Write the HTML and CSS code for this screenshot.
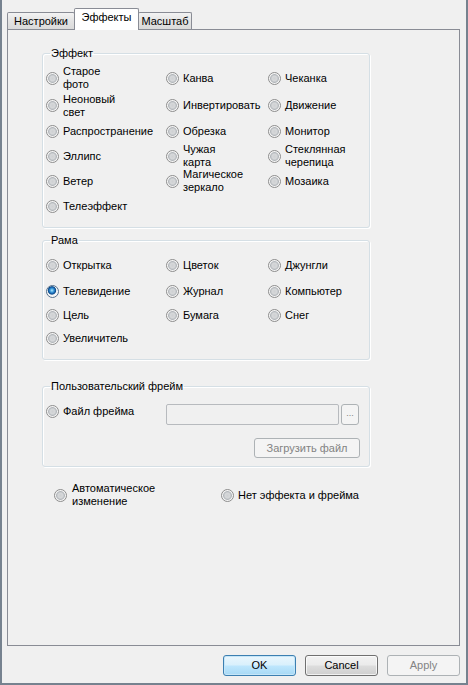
FILE: index.html
```html
<!DOCTYPE html>
<html>
<head>
<meta charset="utf-8">
<link rel="stylesheet" href="styles.css">
</head>
<body>
<div class="window">
  <div class="tabs">
    <div class="tab t1">Настройки</div>
    <div class="tab active t2">Эффекты</div>
    <div class="tab t3">Масштаб</div>
  </div>
  <div class="panel">
    <fieldset class="group g-effect">
      <legend>Эффект</legend>
      <div class="grid effect-grid">
        <div class="opt"><span class="radio"></span><span class="txt">Старое<br>фото</span></div>
        <div class="opt"><span class="radio"></span><span class="txt">Канва</span></div>
        <div class="opt"><span class="radio"></span><span class="txt">Чеканка</span></div>

        <div class="opt"><span class="radio"></span><span class="txt">Неоновый<br>свет</span></div>
        <div class="opt"><span class="radio"></span><span class="txt">Инвертировать</span></div>
        <div class="opt"><span class="radio"></span><span class="txt">Движение</span></div>

        <div class="opt"><span class="radio"></span><span class="txt">Распространение</span></div>
        <div class="opt"><span class="radio"></span><span class="txt">Обрезка</span></div>
        <div class="opt"><span class="radio"></span><span class="txt">Монитор</span></div>

        <div class="opt"><span class="radio"></span><span class="txt">Эллипс</span></div>
        <div class="opt"><span class="radio"></span><span class="txt">Чужая<br>карта</span></div>
        <div class="opt"><span class="radio"></span><span class="txt">Стеклянная<br>черепица</span></div>

        <div class="opt"><span class="radio"></span><span class="txt">Ветер</span></div>
        <div class="opt"><span class="radio"></span><span class="txt">Магическое<br>зеркало</span></div>
        <div class="opt"><span class="radio"></span><span class="txt">Мозаика</span></div>

        <div class="opt"><span class="radio"></span><span class="txt">Телеэффект</span></div>
      </div>
    </fieldset>

    <fieldset class="group g-frame">
      <legend>Рама</legend>
      <div class="grid frame-grid">
        <div class="opt"><span class="radio"></span><span class="txt">Открытка</span></div>
        <div class="opt"><span class="radio"></span><span class="txt">Цветок</span></div>
        <div class="opt"><span class="radio"></span><span class="txt">Джунгли</span></div>

        <div class="opt"><span class="radio checked"></span><span class="txt">Телевидение</span></div>
        <div class="opt"><span class="radio"></span><span class="txt">Журнал</span></div>
        <div class="opt"><span class="radio"></span><span class="txt">Компьютер</span></div>

        <div class="opt"><span class="radio"></span><span class="txt">Цель</span></div>
        <div class="opt"><span class="radio"></span><span class="txt">Бумага</span></div>
        <div class="opt"><span class="radio"></span><span class="txt">Снег</span></div>

        <div class="opt"><span class="radio"></span><span class="txt">Увеличитель</span></div>
      </div>
    </fieldset>

    <fieldset class="group g-custom">
      <legend>Пользовательский фрейм</legend>
      <div class="custom-row">
        <div class="opt file-opt"><span class="radio"></span><span class="txt">Файл фрейма</span></div>
        <div class="file-box">
          <div class="input"></div>
          <div class="btn disabled browse">...</div>
        </div>
      </div>
      <div class="load-row">
        <div class="btn disabled load">Загрузить файл</div>
      </div>
    </fieldset>

    <div class="bottom-opts">
      <div class="opt auto-opt"><span class="radio"></span><span class="txt">Автоматическое<br>изменение</span></div>
      <div class="opt none-opt"><span class="radio"></span><span class="txt">Нет эффекта и фрейма</span></div>
    </div>
  </div>
  <div class="buttons">
    <div class="btn default">OK</div>
    <div class="btn">Cancel</div>
    <div class="btn disabled">Apply</div>
  </div>
</div>
</body>
</html>
```

FILE: styles.css
```css
* {
  box-sizing: border-box;
}

html, body {
  margin: 0;
  padding: 0;
  background: #f0f0f0;
}

body {
  font-family: "Liberation Sans", Arial, sans-serif;
  font-size: 11px;
  line-height: 13px;
  color: #000;
}

.window {
  width: 468px;
  height: 685px;
  background: #f0f0f0;
  border-left: 2px solid #76828f;
  border-right: 2px solid #76828f;
  border-bottom: 2px solid #76828f;
  padding: 8px 0 0 5px;
}

/* Tabs */
.tabs {
  display: flex;
  align-items: flex-end;
  height: 21px;
  position: relative;
  z-index: 2;
}

.tab {
  height: 17px;
  border: 1px solid #898c95;
  border-bottom: none;
  border-radius: 2px 2px 0 0;
  background: linear-gradient(#f3f3f3, #e3e3e3 50%, #dadada);
  text-align: center;
  padding-top: 2px;
  white-space: nowrap;
}

.t1 { width: 68px; }
.t2 { width: 65px; margin-left: -1px; }
.t3 { width: 54px; margin-left: -1px; }

.tab.active {
  height: 22px;
  margin-bottom: -1px;
  background: #ffffff;
  padding-top: 2px;
  position: relative;
  z-index: 3;
}

/* Panel */
.panel {
  width: 453px;
  height: 617px;
  border: 1px solid #898c95;
  background: #f0f0f0;
  padding: 17px 0 0 34px;
}

.group {
  margin: 0;
  width: 328px;
  border: 1px solid #d5dfe5;
  border-radius: 3px;
  box-shadow: inset 1px 1px 0 #ffffff, 1px 1px 0 #ffffff;
  min-width: 0;
}

.group legend {
  padding: 0 1px;
  margin-left: 4px;
  line-height: 13px;
}

.g-effect {
  padding: 4px 0 8px 3px;
}

.g-frame {
  margin-top: 6px;
  padding: 6px 0 10px 3px;
}

.g-custom {
  margin-top: 20px;
  padding: 11px 9px 8px 3px;
}

.grid {
  display: grid;
  grid-template-columns: 120px 102px 1fr;
}

.effect-grid {
  grid-template-rows: 28px 27px 25px 24px 26px 25px;
}

.frame-grid {
  grid-template-rows: 25px 26px 23px 22px;
}

.opt {
  display: flex;
  align-items: center;
  white-space: nowrap;
}

.radio {
  flex: none;
  width: 13px;
  height: 13px;
  border-radius: 50%;
  border: 1px solid #8d8d8d;
  background: radial-gradient(circle at 50% 50%, #cfd1d3 0, #d6d8da 2.5px, #b3b7bb 4px, #f4f4f4 4.8px, #f8f8f8 6px);
  margin-right: 4px;
}

.radio.checked {
  border-color: #56708c;
  background: radial-gradient(circle at 45% 40%, #b5e8fc 0, #4aa6e0 1.6px, #1768b3 3px, #0f4a86 3.8px, #eef2f6 4.6px, #f8f8f8 6px);
}

.txt {
  display: block;
}

/* Custom frame */
.custom-row {
  display: flex;
  align-items: flex-start;
}

.file-opt {
  width: 120px;
  margin-top: 1px;
}

.file-box {
  display: flex;
  gap: 2px;
}

.input {
  width: 173px;
  height: 21px;
  border: 1px solid #b7babe;
  border-radius: 2px;
  background: #f0f0f0;
}

.load-row {
  display: flex;
  justify-content: flex-end;
  margin-top: 13px;
}

.btn {
  height: 21px;
  border: 1px solid #707070;
  border-radius: 3px;
  background: linear-gradient(#f2f2f2 0%, #ebebeb 48%, #dddddd 52%, #cfcfcf 100%);
  display: flex;
  align-items: center;
  justify-content: center;
  white-space: nowrap;
  box-shadow: inset 0 0 0 1px rgba(255, 255, 255, 0.7);
}

.btn.disabled {
  border-color: #adb2b5;
  background: #f4f4f4;
  color: #838383;
  box-shadow: none;
}

.browse {
  width: 18px;
  height: 21px;
  font-size: 9px;
  padding-bottom: 2px;
}

.load {
  width: 106px;
  height: 20px;
}

/* Bottom options */
.bottom-opts {
  display: flex;
  align-items: center;
  margin-top: 15px;
}

.auto-opt {
  margin-left: 12px;
  width: 167px;
}

.auto-opt .radio {
  margin-right: 5px;
}

/* Dialog buttons */
.buttons {
  width: 453px;
  display: flex;
  justify-content: flex-end;
  gap: 9px;
  margin-top: 9px;
}

.buttons .btn {
  width: 73px;
}

.btn.default {
  border-color: #3c7fb1;
  background: linear-gradient(#eaf6fd 0%, #d9f0fc 48%, #bee6fd 52%, #a7d9f5 100%);
  box-shadow: inset 0 0 0 1px #c6e6f8;
}
```
